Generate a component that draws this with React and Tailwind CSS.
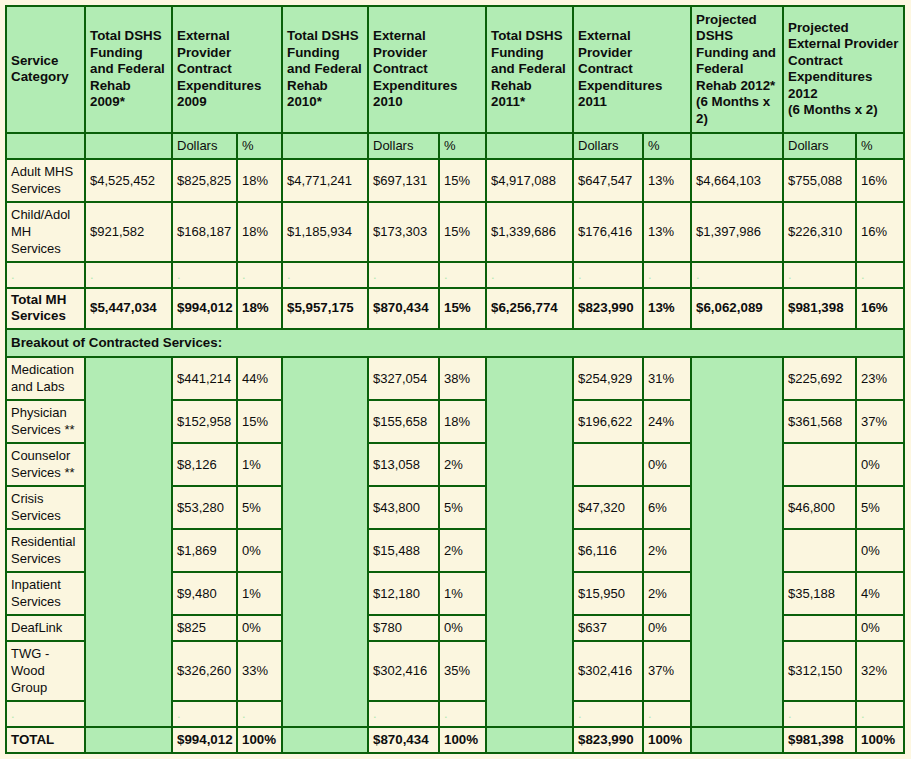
import React from 'react'

const line = 'border-r-2 border-b-2 border-[#0a600a]'
const green = 'bg-[#b2ecb4]'
const cream = 'bg-[#fbf6df]'
const cell = `${line} px-[4px] py-[3.5px] align-middle whitespace-nowrap`
const wrapCell = `${line} px-[4px] py-[3.5px] align-middle`

const colWidths = ['w-[79px]', 'w-[87px]', 'w-[65px]', 'w-[45px]', 'w-[86px]', 'w-[71px]', 'w-[47px]', 'w-[87px]', 'w-[70px]', 'w-[48px]', 'w-[92px]', 'w-[73px]', 'w-[48px]']

const headers = [
  { lines: ['Service', 'Category'] },
  { lines: ['Total DSHS', 'Funding', 'and Federal', 'Rehab', '2009*'] },
  { lines: ['External', 'Provider', 'Contract', 'Expenditures', '2009'], span: 2 },
  { lines: ['Total DSHS', 'Funding', 'and Federal', 'Rehab', '2010*'] },
  { lines: ['External', 'Provider', 'Contract', 'Expenditures', '2010'], span: 2 },
  { lines: ['Total DSHS', 'Funding', 'and Federal', 'Rehab', '2011*'] },
  { lines: ['External', 'Provider', 'Contract', 'Expenditures', '2011'], span: 2 },
  { lines: ['Projected', 'DSHS', 'Funding and', 'Federal', 'Rehab 2012*', '(6 Months x', '2)'] },
  { lines: ['Projected', 'External Provider', 'Contract', 'Expenditures', '2012', '(6 Months x 2)'], span: 2 },
]

const subHeader = ['', '', 'Dollars', '%', '', 'Dollars', '%', '', 'Dollars', '%', '', 'Dollars', '%']

const topRows = [
  ['Adult MHS Services', '$4,525,452', '$825,825', '18%', '$4,771,241', '$697,131', '15%', '$4,917,088', '$647,547', '13%', '$4,664,103', '$755,088', '16%'],
  ['Child/Adol MH Services', '$921,582', '$168,187', '18%', '$1,185,934', '$173,303', '15%', '$1,339,686', '$176,416', '13%', '$1,397,986', '$226,310', '16%'],
]

const totalMH = ['Total MH Services', '$5,447,034', '$994,012', '18%', '$5,957,175', '$870,434', '15%', '$6,256,774', '$823,990', '13%', '$6,062,089', '$981,398', '16%']

// label, then dollars/% for 2009, 2010, 2011, 2012
const breakout = [
  ['Medication and Labs', '$441,214', '44%', '$327,054', '38%', '$254,929', '31%', '$225,692', '23%'],
  ['Physician Services **', '$152,958', '15%', '$155,658', '18%', '$196,622', '24%', '$361,568', '37%'],
  ['Counselor Services **', '$8,126', '1%', '$13,058', '2%', '', '0%', '', '0%'],
  ['Crisis Services', '$53,280', '5%', '$43,800', '5%', '$47,320', '6%', '$46,800', '5%'],
  ['Residential Services', '$1,869', '0%', '$15,488', '2%', '$6,116', '2%', '', '0%'],
  ['Inpatient Services', '$9,480', '1%', '$12,180', '1%', '$15,950', '2%', '$35,188', '4%'],
  ['DeafLink', '$825', '0%', '$780', '0%', '$637', '0%', '', '0%'],
  ['TWG - Wood Group', '$326,260', '33%', '$302,416', '35%', '$302,416', '37%', '$312,150', '32%'],
]

const grandTotal = [['$994,012', '100%'], ['$870,434', '100%'], ['$823,990', '100%'], ['$981,398', '100%']]

function Dot() {
  return <span className="text-[#b2e8b2]">.</span>
}

export default function App() {
  return (
    <div className="min-h-screen bg-[#fdf7e1] p-[5px] text-[#0d0d0d] font-['Liberation_Sans',Arial,sans-serif] text-[13px] leading-[17px]">
      <table className="w-[900px] table-fixed border-separate border-spacing-0 border-l-2 border-t-2 border-[#0a600a]">
        <colgroup>
          {colWidths.map((w, i) => (
            <col key={i} className={w} />
          ))}
        </colgroup>
        <tbody>
          <tr>
            {headers.map((h, i) => (
              <th key={i} colSpan={h.span || 1} className={`${line} px-[4px] py-[4.5px] align-middle whitespace-nowrap ${green} text-left font-bold text-[13.33px] leading-[16.5px]`}>
                {h.lines.map((l, j) => (
                  <div key={j}>{l}</div>
                ))}
              </th>
            ))}
          </tr>

          <tr>
            {subHeader.map((s, i) => (
              <td key={i} className={`${cell} ${green}`}>
                {s}
              </td>
            ))}
          </tr>

          {topRows.map((row) => (
            <tr key={row[0]}>
              {row.map((v, i) => (
                <td key={i} className={`${i === 0 ? wrapCell : cell} ${cream}`}>
                  {v}
                </td>
              ))}
            </tr>
          ))}

          <tr>
            {subHeader.map((_, i) => (
              <td key={i} className={`${cell} ${cream}`}>
                <Dot />
              </td>
            ))}
          </tr>

          <tr>
            {totalMH.map((v, i) => (
              <td key={i} className={`${i === 0 ? wrapCell : cell} ${cream} font-bold text-[13.33px] leading-[16px]`}>
                {v}
              </td>
            ))}
          </tr>

          <tr>
            <td colSpan={13} className={`${line} px-[4px] py-[4.5px] align-middle ${green} font-bold text-[13.33px]`}>
              Breakout of Contracted Services:
            </td>
          </tr>

          {breakout.map((row, r) => (
            <tr key={row[0]}>
              <td className={`${wrapCell} ${cream}`}>{row[0]}</td>
              {[0, 1, 2, 3].map((k) => (
                <React.Fragment key={k}>
                  {r === 0 && <td rowSpan={breakout.length + 1} className={`${line} ${green}`} />}
                  <td className={`${cell} ${cream}`}>{row[1 + k * 2]}</td>
                  <td className={`${cell} ${cream}`}>{row[2 + k * 2]}</td>
                </React.Fragment>
              ))}
            </tr>
          ))}

          <tr>
            <td className={`${cell} ${cream}`}>
              <Dot />
            </td>
            {[0, 1, 2, 3].map((k) => (
              <React.Fragment key={k}>
                <td className={`${cell} ${cream}`}>
                  <Dot />
                </td>
                <td className={`${cell} ${cream}`}>
                  <Dot />
                </td>
              </React.Fragment>
            ))}
          </tr>

          <tr className="font-bold text-[13.33px]">
            <td className={`${cell} ${cream}`}>TOTAL</td>
            {grandTotal.map(([d, p], k) => (
              <React.Fragment key={k}>
                <td className={`${cell} ${green}`} />
                <td className={`${cell} ${cream}`}>{d}</td>
                <td className={`${cell} ${cream}`}>{p}</td>
              </React.Fragment>
            ))}
          </tr>
        </tbody>
      </table>
    </div>
  )
}
